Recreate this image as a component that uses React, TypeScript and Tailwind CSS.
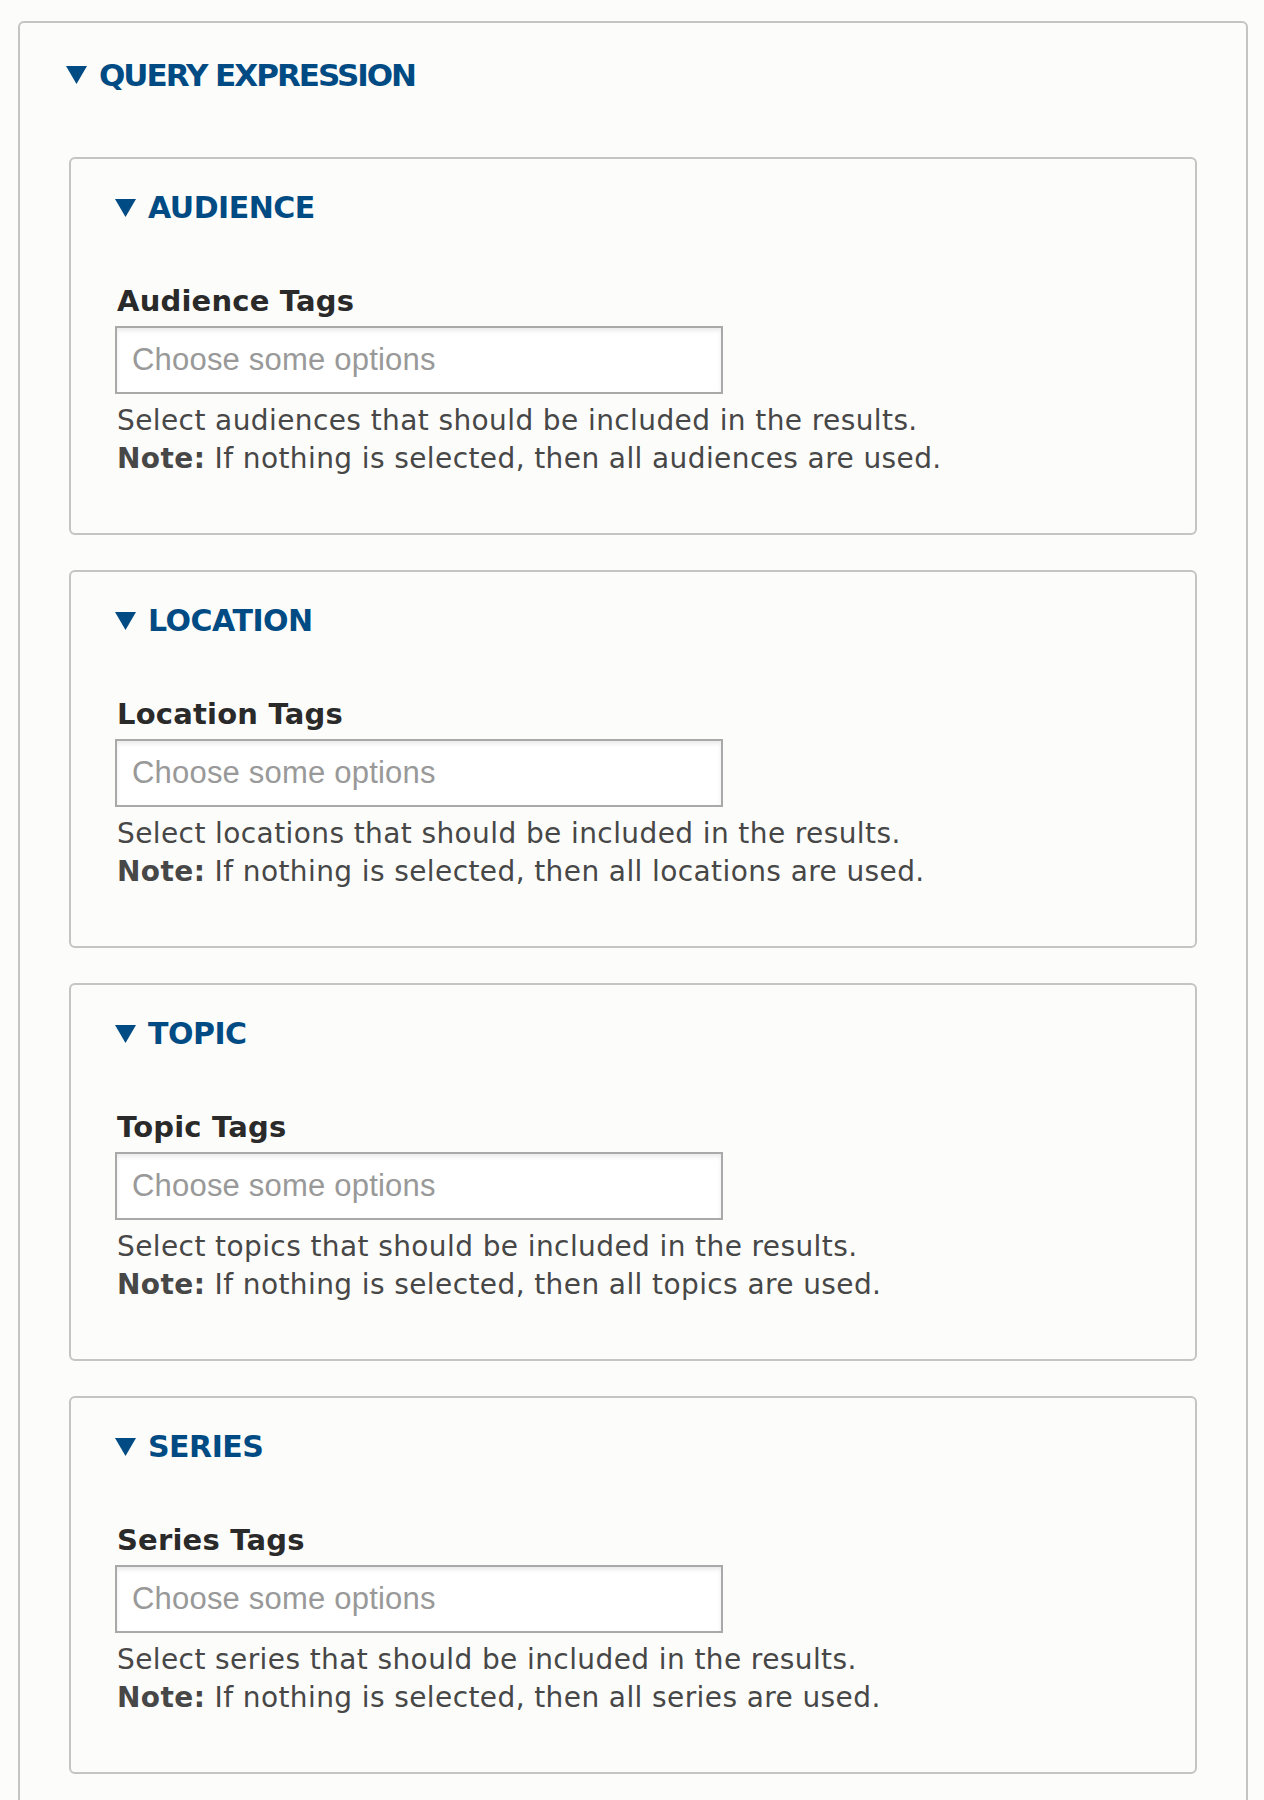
import React from 'react';

const sections = [
  { title: 'AUDIENCE', label: 'Audience Tags', noun: 'audiences' },
  { title: 'LOCATION', label: 'Location Tags', noun: 'locations' },
  { title: 'TOPIC', label: 'Topic Tags', noun: 'topics' },
  { title: 'SERIES', label: 'Series Tags', noun: 'series' },
];

function Caret() {
  return (
    <svg width="21" height="18" viewBox="0 0 21 18" className="shrink-0">
      <polygon points="0,0 21,0 10.5,18" fill="#004b83" />
    </svg>
  );
}

function Section({ title, label, noun }: { title: string; label: string; noun: string }) {
  return (
    <div className="border-2 border-[#c4c4c4] rounded-[6px] pl-[44px] pr-6 pt-[29px] pb-[55px]">
      <div className="flex items-center gap-[12px] h-[40px] text-[30px] tracking-[-0.5px] font-bold text-[#004b83] leading-[40px]">
        <Caret />
        <span>{title}</span>
      </div>
      <div className="mt-[55px] pl-[2px] text-[29px] tracking-[0.2px] leading-[36px] font-bold text-[#2a2a2a]">{label}</div>
      <div className="mt-[7px] w-[608px] h-[68px] border-2 border-[#a9a9a9] bg-white shadow-[inset_0_3px_4px_rgba(0,0,0,0.08)] flex items-center pl-[15px] pr-[11px]">
        <input
          className="w-full bg-transparent outline-none text-[31px] tracking-[0.2px] text-[#333] placeholder:text-[#999]"
          style={{ fontFamily: '"Liberation Sans", Arial, sans-serif' }}
          placeholder="Choose some options"
        />
      </div>
      <div className="mt-[8px] pl-[2px] text-[28px] tracking-[0.4px] leading-[38px] text-[#474747]">
        <div>Select {noun} that should be included in the results.</div>
        <div>
          <span className="font-bold">Note:</span> If nothing is selected, then all {noun} are used.
        </div>
      </div>
    </div>
  );
}

export default function App() {
  return (
    <div
      className="min-h-screen bg-[#fcfcfa] pt-[21px] pl-[18px] pr-[16px]"
      style={{ fontFamily: '"DejaVu Sans", "Lucida Grande", sans-serif' }}
    >
      <div className="border-2 border-[#c4c4c4] rounded-[6px] pt-[30px] px-[49px] pb-[40px]">
        <div className="flex items-center gap-[12px] h-[44px] -ml-[3px] text-[31px] tracking-[-2px] font-bold text-[#004b83] leading-[44px]">
          <Caret />
          <span>QUERY EXPRESSION</span>
        </div>
        <div className="mt-[60px] flex flex-col gap-[35px]">
          {sections.map((s) => (
            <Section key={s.title} {...s} />
          ))}
        </div>
      </div>
    </div>
  );
}
